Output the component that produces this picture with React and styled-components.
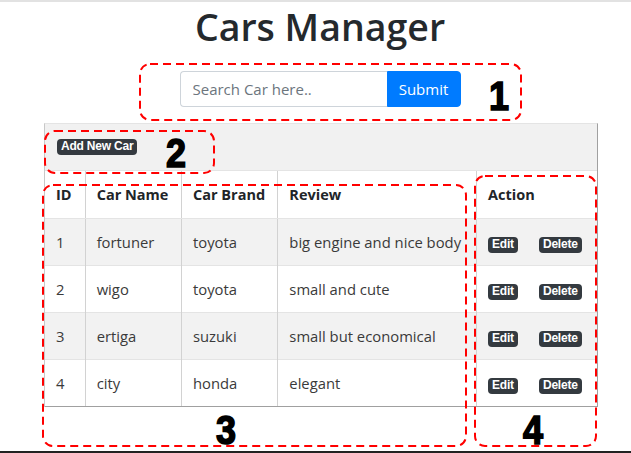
import React from 'react';
import styled, { createGlobalStyle } from 'styled-components';

const GlobalStyle = createGlobalStyle`
  html, body {
    margin: 0;
    padding: 0;
    background: #ffffff;
  }
  body {
    font-family: "Open Sans", "Noto Sans", sans-serif;
    color: #212529;
  }
`;

const Page = styled.div`
  position: relative;
  box-sizing: border-box;
  width: 631px;
  height: 453px;
  padding-left: 9px;
  border-top: 2px solid #e2e2e2;
  border-bottom: 2px solid #222;
  overflow: hidden;
`;

const Title = styled.h1`
  margin: 0;
  padding-top: 1px;
  text-align: center;
  font-size: 37.5px;
  font-weight: 600;
  line-height: 47px;
  color: #24292d;
`;

const SearchForm = styled.form`
  display: flex;
  justify-content: center;
  margin-top: 21px;
`;

const SearchInput = styled.input`
  box-sizing: border-box;
  width: 207px;
  height: 36px;
  padding: 0 12px;
  border: 1px solid #ced4da;
  border-right: none;
  border-radius: 4px 0 0 4px;
  font-family: inherit;
  font-size: 15px;
  color: #495057;
  outline: none;
  &::placeholder {
    color: #6c757d;
  }
`;

const SubmitButton = styled.button`
  box-sizing: border-box;
  width: 74px;
  height: 36px;
  border: 1px solid #007bff;
  border-radius: 0 4px 4px 0;
  background: #007bff;
  color: #fff;
  font-family: inherit;
  font-size: 15px;
  cursor: pointer;
`;

const TableBox = styled.div`
  margin: 16px 0 0 35px;
  width: 552px;
  border-left: 1px solid #c8c8c8;
  border-right: 1px solid #a0a0a0;
  border-top: 1px solid #e4e4e4;
`;

const Toolbar = styled.div`
  display: flex;
  align-items: center;
  height: 46px;
  padding-left: 12px;
  background: #f1f1f1;
`;

const Badge = styled.span`
  display: inline-block;
  padding: 2px 4px 3px;
  border-radius: 4px;
  background: #343a40;
  color: #fff;
  font-family: "Liberation Sans", Arial, sans-serif;
  font-size: ${(p) => p.$size || 12}px;
  font-weight: 700;
  line-height: 11px;
  letter-spacing: -0.2px;
  & + & {
    margin-left: ${(p) => p.$gap || 0}px;
  }
`;

const Table = styled.table`
  width: 100%;
  border-collapse: collapse;
  table-layout: fixed;
  font-size: 14.8px;
`;

const HeadCell = styled.th`
  height: 47px;
  padding: 0 11px;
  text-align: left;
  font-size: 14.5px;
  font-weight: 700;
  white-space: nowrap;
  background: #fff;
  border-top: 1px solid #e4e4e4;
  border-bottom: 1px solid #e4e4e4;
  border-left: 1px solid #d2d2d2;
  &:first-child {
    border-left: none;
  }
`;

const Row = styled.tr`
  background: ${(p) => (p.$striped ? '#f2f2f2' : '#ffffff')};
  &:last-child td {
    border-bottom: 1px solid #a0a0a0;
  }
`;

const Cell = styled.td`
  height: 46px;
  padding: 0 11px;
  white-space: nowrap;
  overflow: visible;
  border-top: 1px solid #e4e4e4;
  border-left: 1px solid #d2d2d2;
  color: #3a3a3a;
  &:first-child {
    border-left: none;
  }
`;

const Annotation = styled.div`
  position: absolute;
  left: ${(p) => p.$x}px;
  top: ${(p) => p.$y}px;
  width: ${(p) => p.$w}px;
  height: ${(p) => p.$h}px;
  pointer-events: none;
`;

const Marker = styled.span`
  position: absolute;
  left: ${(p) => p.$x}px;
  top: ${(p) => p.$y}px;
  font-family: "Liberation Sans", Arial, sans-serif;
  font-size: 40px;
  font-weight: 700;
  line-height: 40px;
  color: #000;
  -webkit-text-stroke: 1.6px #000;
  transform: scaleX(0.9);
  transform-origin: left top;
`;

const DashedBox = ({ x, y, w, h }) => (
  <Annotation $x={x} $y={y} $w={w} $h={h}>
    <svg width={w} height={h}>
      <rect
        x="1"
        y="1"
        width={w - 2}
        height={h - 2}
        rx="10"
        fill="none"
        stroke="#ff0000"
        strokeWidth="2"
        strokeDasharray="8 5"
      />
    </svg>
  </Annotation>
);

const cars = [
  { id: 1, name: 'fortuner', brand: 'toyota', review: 'big engine and nice body' },
  { id: 2, name: 'wigo', brand: 'toyota', review: 'small and cute' },
  { id: 3, name: 'ertiga', brand: 'suzuki', review: 'small but economical' },
  { id: 4, name: 'city', brand: 'honda', review: 'elegant' },
];

export default function App() {
  return (
    <Page>
      <GlobalStyle />
      <Title>Cars Manager</Title>
      <SearchForm onSubmit={(e) => e.preventDefault()}>
        <SearchInput placeholder="Search Car here.." />
        <SubmitButton type="submit">Submit</SubmitButton>
      </SearchForm>
      <TableBox>
        <Toolbar>
          <Badge>Add New Car</Badge>
        </Toolbar>
        <Table>
          <colgroup>
            <col style={{ width: 40 }} />
            <col style={{ width: 96 }} />
            <col style={{ width: 96 }} />
            <col style={{ width: 198 }} />
            <col style={{ width: 120 }} />
          </colgroup>
          <thead>
            <tr>
              <HeadCell>ID</HeadCell>
              <HeadCell>Car Name</HeadCell>
              <HeadCell>Car Brand</HeadCell>
              <HeadCell>Review</HeadCell>
              <HeadCell>Action</HeadCell>
            </tr>
          </thead>
          <tbody>
            {cars.map((car, i) => (
              <Row key={car.id} $striped={i % 2 === 0}>
                <Cell>{car.id}</Cell>
                <Cell>{car.name}</Cell>
                <Cell>{car.brand}</Cell>
                <Cell>{car.review}</Cell>
                <Cell>
                  <Badge>Edit</Badge>
                  <Badge $gap={21}>Delete</Badge>
                </Cell>
              </Row>
            ))}
          </tbody>
        </Table>
      </TableBox>

      <DashedBox x={139} y={61} w={383} h={58} />
      <DashedBox x={44} y={128} w={171} h={44} />
      <DashedBox x={42} y={182} w={425} h={263} />
      <DashedBox x={474} y={173} w={123} h={272} />
      <Marker $x={489} $y={74}>1</Marker>
      <Marker $x={166} $y={131}>2</Marker>
      <Marker $x={216} $y={408}>3</Marker>
      <Marker $x={523} $y={408}>4</Marker>
    </Page>
  );
}
